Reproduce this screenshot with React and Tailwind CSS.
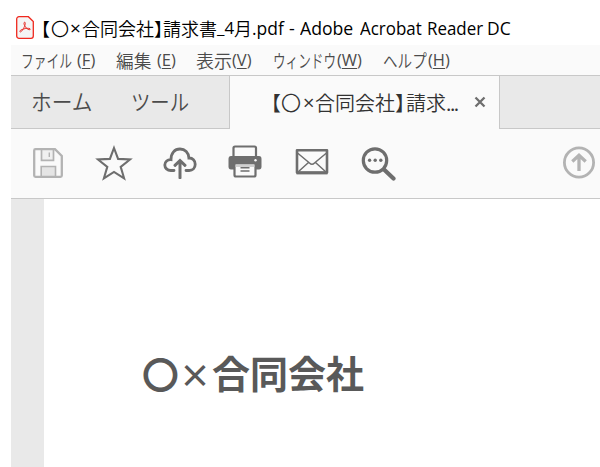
import React from 'react';

const jp = "font-['Noto_Sans_CJK_JP',sans-serif]";
const latin = "font-['Open_Sans','Noto_Sans_CJK_JP',sans-serif]";
const half = "[font-feature-settings:'halt']";

function Part({ className = '', inner = '', children }) {
  return (
    <span className={`block shrink-0 whitespace-pre ${className}`}>
      <span className={`inline-block origin-left ${inner}`}>{children}</span>
    </span>
  );
}

function MenuItem({ className, nameClass, inner, name, accel }) {
  return (
    <div className={`flex shrink-0 ${className}`}>
      <Part className={`${jp} ${nameClass}`} inner={inner}>{name}</Part>
      <Part className={`${latin} text-[17px] font-normal`} inner="scale-x-[0.97]">(<span className="underline decoration-1 underline-offset-2">{accel}</span>)</Part>
    </div>
  );
}

function PdfIcon() {
  return (
    <svg className="shrink-0" width="18" height="23" viewBox="0 0 18 23" fill="none">
      <path d="M3 .7h9.4L17.3 5.500V20a2.300 2.300 0 0 1-2.300 2.300H3A2.300 2.300 0 0 1 .7 20V3A2.300 2.300 0 0 1 3 .7Z" fill="#f5f5f5" stroke="#f0281e" strokeWidth="1.300" />
      <path d="M8.700 6.200C7.600 6.300 7.900 8.200 8.600 9.500C9.700 11.600 11.300 13.200 12.900 13.700C14.100 14.100 14.800 13.200 14 12.700C12.300 11.700 7.600 12.600 5 14C3.700 14.700 3.500 15.700 4.200 15.900C5.500 16.100 7.400 13.100 8.500 10.300C9.300 8.200 9.700 6.200 8.700 6.200Z" stroke="#e8302a" strokeWidth="1" />
    </svg>
  );
}

function Toolbar() {
  return (
    <div className="flex h-[70px] shrink-0 items-start border-b border-[#c8c8c8] bg-[#fafafa] pl-[22px] pt-[19px]">
      <svg className="shrink-0" width="30" height="30" viewBox="0 0 30 30" fill="none" stroke="#b3b3b3" strokeWidth="2.300">
        <path d="M8.500 1V12.300H20.500V1" fill="#f0f0f0" strokeWidth="1.700" />
        <path d="M16.300 4.500V9" strokeWidth="1.400" />
        <path d="M8.200 29V18.500H22.500V29" fill="#e5e5e5" strokeWidth="1.600" />
        <path d="M2.500 1.200H22L28.800 8V27.500Q28.800 28.800 27.500 28.800H2.500Q1.200 28.800 1.200 27.500V2.500Q1.200 1.200 2.500 1.200Z" />
      </svg>
      <svg className="ml-[32px] -mt-[3px] shrink-0" width="38" height="36" viewBox="0 0 38 36" fill="none" stroke="#6e6e6e" strokeWidth="2.100">
        <path d="M19 3L23.100 13.900L35 14.500L25.700 21.800L29.100 33.300L19 26.900L8.900 33.300L12.300 21.800L3 14.500L14.900 13.900Z" />
      </svg>
      <svg className="ml-[30px] -mt-px shrink-0" width="34" height="32" viewBox="0 0 34 32" fill="none" stroke="#6e6e6e" strokeWidth="2.800" strokeLinecap="round">
        <path d="M11 23.500H7.800C4.300 23.500 1.800 21 1.800 18C1.800 14.700 4.600 12.300 8 12.600C8 6 11.700 2 17 2C22 2 25.700 5.600 25.900 11C29.700 10.900 32.200 13.600 32.200 17.200C32.200 21 29.600 23.500 26.200 23.500H23" />
        <path d="M17 30.800V14.500M12 18.300L17 13.500L22 18.300" strokeWidth="3" />
      </svg>
      <svg className="ml-[31px] -mt-[3px] shrink-0" width="34" height="33" viewBox="0 0 34 33">
        <path d="M5.500 12V3Q5.500 1.500 7 1.500H26.500Q28 1.500 28 3V12" fill="#fafafa" stroke="#6e6e6e" strokeWidth="2.200" />
        <path d="M3 11H31Q33.500 11 33.500 14V21.500Q33.500 24.500 31 24.500H3Q.500 24.500 .500 21.500V14Q.500 11 3 11Z" fill="#6e6e6e" />
        <path d="M6.500 18.500H27.500V30Q27.500 31.500 26 31.500H8Q6.500 31.500 6.500 30Z" fill="#fafafa" stroke="#6e6e6e" strokeWidth="2.200" />
        <path d="M7.600 19.500H26.400V22H7.600Z" fill="#cfcfcf" />
        <path d="M12.500 22.700H21.500M12.500 26H21.500" stroke="#6e6e6e" strokeWidth="1.400" />
        <circle cx="27.500" cy="15.300" r="1.200" fill="#fafafa" />
      </svg>
      <svg className="ml-[33px] mt-px shrink-0" width="34" height="26" viewBox="0 0 34 26" fill="none" stroke="#6e6e6e">
        <path d="M2 1.300H32V23.500H2Z" strokeWidth="2.600" strokeLinejoin="round" />
        <path d="M1.500 24H32.500" strokeWidth="2.800" />
        <path d="M2.500 4L14.500 14Q17 16.500 19.500 14L31.500 4M3 23L13.500 13.500M31 23L20.500 13.500" strokeWidth="1.500" />
      </svg>
      <svg className="ml-[32px] -mt-[2px] shrink-0" width="36" height="35" viewBox="0 0 36 35" fill="none" stroke="#6e6e6e">
        <circle cx="14" cy="14.500" r="11.700" strokeWidth="3.200" />
        <path d="M23 23.400L32.500 32.500" strokeWidth="4.200" strokeLinecap="round" />
        <g fill="#6e6e6e" stroke="none"><circle cx="8.600" cy="14.300" r="1.700" /><circle cx="14.200" cy="14.300" r="1.700" /><circle cx="19.800" cy="14.300" r="1.700" /></g>
      </svg>
      <svg className="ml-[165px] -mt-[2px] shrink-0" width="33" height="33" viewBox="0 0 33 33" fill="none" stroke="#b3b3b3">
        <circle cx="17" cy="16.500" r="14.600" strokeWidth="2.800" />
        <path d="M17 25V9.500M10.300 15.500L17 9.300L23.700 15.500" strokeWidth="3.300" />
      </svg>
    </div>
  );
}

export default function App() {
  return (
    <main className="h-[467px] w-[600px] overflow-hidden bg-white">
      <header className="flex h-[45px] pl-4 pt-4 text-black">
        <PdfIcon />
        <div className="flex h-6 pl-[7px] text-[18px] [font-weight:350] leading-6">
          <Part className={`${jp} ${half} w-[10px]`}>【</Part>
          <Part className={`${jp} w-[18px]`}>〇</Part>
          <Part className={`${latin} w-[13px] pl-px font-normal`} inner="text-[19px]">×</Part>
          <Part className={`${jp} w-[72px]`}>合同会社</Part>
          <Part className={`${jp} ${half} w-[9px]`}>】</Part>
          <Part className={`${jp} w-[54px]`}>請求書</Part>
          <Part className={`${latin} w-[17px] text-[17px] font-normal`}>_4</Part>
          <Part className={`${jp} w-[18px]`}>月</Part>
          <Part className={`${latin} w-[37px] font-normal`} inner="scale-x-[0.97]">.pdf</Part>
          <Part className={`${latin} w-[11px] font-normal`}>-</Part>
          <Part className={`${latin} w-[60px] font-normal`} inner="scale-x-[0.98]">Adobe</Part>
          <Part className={`${latin} w-[67px] font-normal`} inner="scale-x-[0.94]">Acrobat</Part>
          <Part className={`${latin} w-[60px] font-normal`} inner="scale-x-[0.94]">Reader</Part>
          <Part className={`${latin} font-normal`} inner="scale-x-[0.97]">DC</Part>
        </div>
      </header>
      <div className="ml-[11px] flex h-[422px] flex-col">
        <nav className="flex h-[30px] shrink-0 bg-[#fafafa] pl-[10px] pt-[3px] text-[18px] [font-weight:350] leading-6 text-[#4b4b4b]">
          <MenuItem className="w-[95px]" name="ファイル" nameClass="w-[56px]" inner="scale-x-[0.71]" accel="F" />
          <MenuItem className="w-[80px]" name="編集" nameClass="w-[41px]" inner="scale-x-[0.98]" accel="E" />
          <MenuItem className="w-[77px]" name="表示" nameClass="w-[36px]" accel="V" />
          <MenuItem className="w-[110px]" name="ウィンドウ" nameClass="w-[64px]" inner="scale-x-[0.7]" accel="W" />
          <MenuItem className="" name="ヘルプ" nameClass="w-[45px]" inner="scale-x-[0.81]" accel="H" />
        </nav>
        <div className="flex h-[54px] shrink-0 border-t border-[#c8c8c8] bg-[#fafafa] text-[#323232]">
          <div className={`flex w-[219px] shrink-0 border-b border-r border-[#c8c8c8] bg-[#e9e9e9] pl-5 text-[22px] [font-weight:350] leading-[48px] text-[#4b4b4b] ${jp}`}>
            <Part className="w-[100px]" inner="scale-x-[0.94]">ホーム</Part>
            <Part inner="scale-x-[0.88]">ツール</Part>
          </div>
          <div className={`flex w-[269px] shrink-0 pl-[41px] text-[20px] [font-weight:350] leading-[54px] ${jp}`}>
            <Part className={`${half} w-[10px]`}>【</Part>
            <Part className="w-[20px]">〇</Part>
            <Part className={`${latin} w-[14px] pl-[2px] font-normal`}>×</Part>
            <Part className="w-[80px]">合同会社</Part>
            <Part className={`${half} w-[11px]`}>】</Part>
            <Part className="w-[40px]">請求</Part>
            <Part className="w-[28px] tracking-[-1.5px]">...</Part>
            <svg className="mt-[20px] shrink-0" width="12" height="12" viewBox="0 0 12 12"><path d="M1.500 1.500L10.500 10.500M10.500 1.500L1.500 10.500" stroke="#6e6e6e" strokeWidth="2.300" /></svg>
          </div>
          <div className="w-[101px] border-b border-l border-[#c8c8c8] bg-[#e9e9e9]" />
        </div>
        <Toolbar />
        <section className="flex min-h-0 flex-1 bg-white">
          <div className="w-[33px] shrink-0 bg-[#e9e9e9]" />
          <h1 className={`flex pl-[98px] pt-[145px] text-[38px] font-bold leading-[56px] text-[#595959] ${jp}`}>
            <Part className="w-[38px]" inner="translate-y-px scale-[0.97]">〇</Part>
            <Part className="w-[32px]" inner="-indent-[1px] text-[32px] font-bold">×</Part>
            <Part>合同会社</Part>
          </h1>
        </section>
      </div>
    </main>
  );
}
